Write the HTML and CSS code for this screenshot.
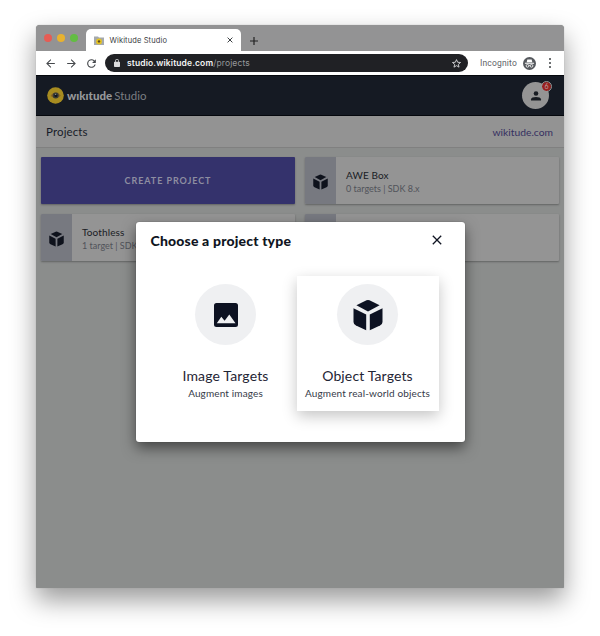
FILE: index.html
```html
<!DOCTYPE html>
<html lang="en">
<head>
<meta charset="utf-8">
<title>Wikitude Studio</title>
<link rel="stylesheet" href="styles.css">
</head>
<body>
<svg class="defs" aria-hidden="true">
  <symbol id="cube" viewBox="0 0 30 32">
    <path d="M3.4 6.2 13.500 1.300Q15 .6 16.500 1.300L26.600 6.200 15 12.400z"/>
    <path d="M.5 9.200 13.200 15.400V31.200L3 26.600Q.5 25.300.5 23z"/>
    <path d="M29.500 9.200 16.800 15.400V31.200L27 26.600Q29.500 25.300 29.500 23z"/>
  </symbol>
</svg>
<div class="window">
  <div class="tabs">
    <i class="light red"></i><i class="light yellow"></i><i class="light green"></i>
    <div class="tab">
      <svg class="favicon" viewBox="0 0 10 9"><path d="M0 .5h4l1 1h5V9H0z" fill="#a5a9ac"/><circle cx="5" cy="5.4" r="2.9" fill="#e6c31f"/><circle cx="5" cy="5.4" r="1.2" fill="#5a4a20"/></svg>
      <span>Wikitude Studio</span>
      <svg class="tab-close" viewBox="0 0 6 6"><path d="M.6.6l4.8 4.8M5.4.6.6 5.4" stroke="#3c4043" stroke-width="1"/></svg>
    </div>
    <svg class="new-tab" viewBox="0 0 8 8"><path d="M4 0v8M0 4h8" stroke="#222" stroke-width="1.2"/></svg>
  </div>
  <div class="toolbar">
    <svg class="nav" viewBox="0 0 24 24"><path d="M20 11H7.8l5.6-5.6L12 4l-8 8 8 8 1.4-1.4L7.8 13H20z"/></svg>
    <svg class="nav" viewBox="0 0 24 24"><path d="M4 11h12.2l-5.6-5.6L12 4l8 8-8 8-1.4-1.4 5.6-5.6H4z"/></svg>
    <svg class="nav" viewBox="0 0 24 24"><path d="M17.65 6.35A8 8 0 1 0 19.73 14h-2.08A6 6 0 1 1 12 6c1.66 0 3.14.69 4.22 1.78L13 11h7V4z"/></svg>
    <div class="address">
      <svg class="lock" viewBox="0 0 16 21"><path d="M14 7h-1V5A5 5 0 0 0 3 5v2H2a2 2 0 0 0-2 2v10a2 2 0 0 0 2 2h12a2 2 0 0 0 2-2V9a2 2 0 0 0-2-2zM5 7V5a3 3 0 0 1 6 0v2z"/></svg>
      <span class="url"><b>studio.wikitude.com</b>/projects</span>
      <svg class="star" viewBox="0 0 24 24"><path d="m12 3.5 2.5 5.8 6.3.5-4.8 4.1 1.5 6.1-5.500-3.300L6.500 20 8 13.900 3.200 9.800l6.300-.5z" fill="none" stroke="#d8d9db" stroke-width="2"/></svg>
    </div>
    <span class="incognito">Incognito</span>
    <svg class="spy" viewBox="0 0 24 24"><circle cx="12" cy="12" r="12" fill="#55585d"/><path d="M8 4.500h8l1.200 5H6.800zM3.500 10.800h17v1.500h-17z" fill="#fff"/><g fill="none" stroke="#fff" stroke-width="1.500"><circle cx="8.300" cy="16.300" r="2.500"/><circle cx="15.700" cy="16.300" r="2.500"/><path d="M10.700 16q1.300-1 2.600 0"/></g></svg>
    <svg class="dots" viewBox="0 0 4 12"><g fill="#3c4043"><circle cx="2" cy="2" r="1"/><circle cx="2" cy="6" r="1"/><circle cx="2" cy="10" r="1"/></g></svg>
  </div>
  <header class="header">
    <svg class="logo" viewBox="0 0 17 17"><circle cx="8.500" cy="8.500" r="8.300" fill="#a78c20"/><path d="M3.500 9Q6 4.800 11 5.700l2.800 3Q9 13.300 3.500 9" fill="#8a6423"/><circle cx="8.700" cy="8.600" r="3" fill="#373a35"/><circle cx="8.900" cy="8.400" r="1.500" fill="#10151d"/><circle cx="8.700" cy="7.300" r=".6" fill="#aaa"/></svg>
    <span class="brand">wıkıtude</span><span class="product">Studio</span>
    <div class="avatar">
      <svg viewBox="0 0 12 12"><circle cx="6" cy="3.500" r="2.300"/><path d="M1 10.400V9.500C1 7.700 3.500 7 6 7s5 .7 5 2.500v.9z"/></svg>
      <span class="badge">6</span>
    </div>
  </header>
  <div class="subhead"><span>Projects</span><a>wikitude.com</a></div>
  <main class="grid">
    <div class="create">CREATE PROJECT</div>
    <div class="project"><div class="thumb"><svg><use href="#cube"/></svg></div><div class="info"><strong>AWE Box</strong><small>0 targets | SDK 8.x</small></div></div>
    <div class="project"><div class="thumb"><svg><use href="#cube"/></svg></div><div class="info"><strong>Toothless</strong><small>1 target | SDK</small></div></div>
    <div class="project"><div class="thumb"></div></div>
  </main>
</div>
<section class="modal">
  <div class="modal-head"><h1>Choose a project type</h1><svg viewBox="0 0 10 10"><path d="m.8.8 8.400 8.400M9.200.8.8 9.200" stroke="#101522" stroke-width="1.300"/></svg></div>
  <div class="choices">
    <div class="choice">
      <div class="circle"><svg class="picture" viewBox="0 0 24 24"><path fill-rule="evenodd" d="M2.500 0h19A2.500 2.500 0 0 1 24 2.500v19a2.500 2.500 0 0 1-2.500 2.500h-19A2.500 2.500 0 0 1 0 21.500v-19A2.500 2.500 0 0 1 2.500 0zM2.800 20.300h18.700l-6.200-8.800-4.700 6.300-3.300-4z"/></svg></div>
      <h2>Image Targets</h2><p>Augment images</p>
    </div>
    <div class="choice selected">
      <div class="circle"><svg class="box"><use href="#cube"/></svg></div>
      <h2>Object Targets</h2><p>Augment real-world objects</p>
    </div>
  </div>
</section>
</body>
</html>
```

FILE: styles.css
```css
* { box-sizing: border-box; }
body { margin: 0; height: 636px; overflow: hidden; background: #fff; padding: 25px 36px; font-family: Lato, sans-serif; color: #101522; }
svg { display: block; flex: none; }
.defs { position: absolute; width: 0; height: 0; }
.window { width: 528px; height: 563px; border-radius: 4px 4px 1px 1px; overflow: hidden; background: #8b8d8c; box-shadow: 0 0 1px #999, 0 12px 26px rgba(0,0,0,.4); }

.tabs { height: 26px; display: flex; align-items: center; background: #939394; }
.light { width: 8px; height: 8px; border-radius: 50%; margin-right: 5px; }
.red { background: #e65c54; margin-left: 8px; }
.yellow { background: #e8b22f; }
.green { background: #63bd43; }
.tab { width: 155px; height: 22px; margin: 4px 0 0 3px; padding: 0 8px; border-radius: 5px 5px 0 0; background: #fff; display: flex; align-items: center; font: 7.5px Inter, sans-serif; letter-spacing: .12px; color: #3c4043; }
.tab span { margin-left: 5.500px; }
.favicon { width: 10px; height: 9px; }
.tab-close { width: 6px; height: 6px; margin-left: auto; }
.new-tab { width: 8px; height: 8px; margin: 5px 0 0 9px; }

.toolbar { height: 24px; display: flex; align-items: center; background: #fff; font-family: Roboto, sans-serif; }
.nav { width: 13px; height: 13px; fill: #45484c; margin-left: 7.500px; }
.nav:first-child { margin-left: 8px; }
.address { width: 363px; height: 18px; margin-left: 7px; padding: 0 6px 0 9px; border-radius: 9px; background: #202125; display: flex; align-items: center; color: #96989b; }
.lock { width: 6px; height: 8px; fill: #dcdcdd; }
.url { margin-left: 7px; font: 8.500px Inter, sans-serif; letter-spacing: .13px; }
.url b { font-weight: 600; color: #f4f4f4; }
.star { width: 11px; height: 11px; margin-left: auto; }
.incognito { margin-left: 12px; font-size: 8.500px; letter-spacing: .18px; color: #5f6368; }
.spy { width: 13px; height: 13px; margin-left: 6px; }
.dots { width: 4px; height: 12px; margin-left: 12px; }

.header { height: 41px; padding-left: 11px; padding-right: 15px; display: flex; align-items: center; background: #151a23; border: solid #05080d; border-width: 1px 0; }
.logo { width: 17px; height: 17px; }
.brand { margin-left: 3px; font-size: 11.500px; font-weight: 900; color: #96989a; }
.product { margin-left: 2px; font-size: 11.500px; font-weight: 400; color: #7b7e82; }
.avatar { position: relative; margin-left: auto; width: 27px; height: 27px; border-radius: 50%; background: #949494; display: grid; place-items: center; }
.avatar svg { width: 12px; height: 12px; fill: #181c22; }
.badge { position: absolute; top: 0; right: -2px; width: 9px; height: 9px; border-radius: 50%; background: #991f1f; outline: 1px solid #969696; color: #b9a0a0; font-size: 7px; line-height: 9px; text-align: center; }
.subhead { height: 32px; padding: 0 11px 0 10px; display: flex; align-items: center; justify-content: space-between; background: #939393; border-bottom: 1px solid #808080; font-size: 11.500px; letter-spacing: .13px; color: #171b28; }
.subhead a { color: #353061; font-size: 10.300px; letter-spacing: 0; }
.grid { padding: 9px 5px; display: grid; grid-template-columns: 254px 254px; grid-auto-rows: 47px; gap: 10px; }
.create, .project { border-radius: 1px; box-shadow: 0 1px 2px rgba(0,0,0,.3); }
.create { display: grid; place-items: center; background: #34326c; color: #8e8ea1; font-size: 9px; font-weight: 700; letter-spacing: .93px; }
.project { display: flex; overflow: hidden; background: #949494; }
.thumb { width: 31px; display: grid; place-items: center; background: #777980; }
.thumb svg { width: 15px; height: 16px; margin-top: 2px; fill: #0e121c; }
.info { padding: 12px 0 0 10px; color: #191c25; }
.info strong { display: block; font-size: 10px; line-height: 13px; font-weight: 400; letter-spacing: .12px; }
.info small { display: block; font-size: 9px; line-height: 13px; color: #51535a; }

.modal { position: absolute; left: 135.500px; top: 222px; width: 329px; height: 220px; border-radius: 3px; background: #fff; box-shadow: 0 0 1px #444, 0 6px 14px rgba(0,0,0,.5); }
.modal-head { height: 54px; padding: 0 23px 16px 15px; display: flex; align-items: center; justify-content: space-between; }
.modal-head svg { width: 10px; height: 10px; margin-bottom: 3px; }
h1 { margin: 0; font-size: 14px; line-height: 18px; font-weight: 900; letter-spacing: .18px; }
.choices { display: flex; padding-left: 19px; }
.choice { width: 142px; height: 135px; padding-top: 8px; text-align: center; color: #1f2535; }
.selected { background: #fff; box-shadow: 0 5px 14px rgba(0,0,0,.23); }
.circle { width: 61px; height: 61px; border-radius: 50%; margin: 0 auto; background: #eff0f2; display: grid; place-items: center; fill: #0d1222; }
.picture { width: 24px; height: 24px; }
.box { width: 30px; height: 32px; }
h2 { margin: 21.500px 0 0; font-size: 14px; line-height: 18px; font-weight: 400; letter-spacing: .14px; }
p { margin: 2px 0 0; font-size: 10px; line-height: 13px; letter-spacing: .13px; white-space: nowrap; color: #353a49; }
```
